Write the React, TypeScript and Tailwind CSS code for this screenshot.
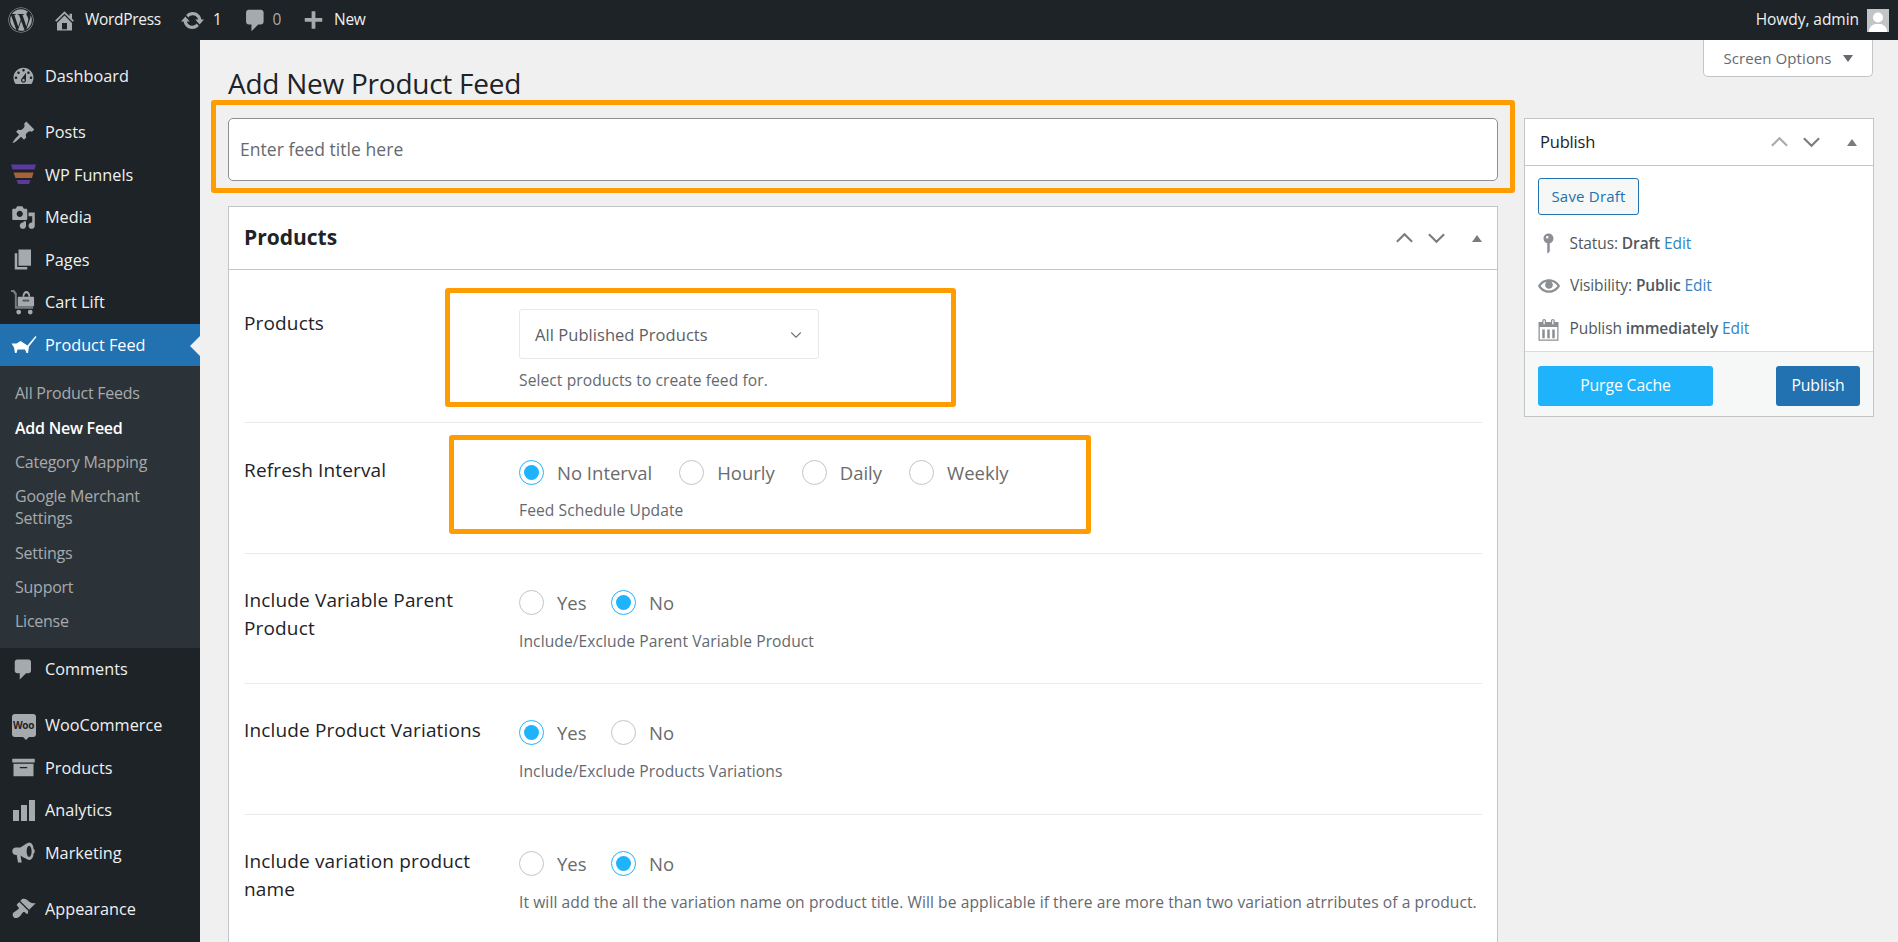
import { FaWordpress } from "react-icons/fa";
import { ChevronDown } from "lucide-react";

const font = "font-['Open_Sans','Noto_Sans',sans-serif]";

function Dash({ d, className, evenodd }: { d: string; className?: string; evenodd?: boolean }) {
  return (
    <svg viewBox="0 0 20 20" className={className} fill="currentColor">
      <path d={d} fillRule={evenodd ? "evenodd" : undefined} />
    </svg>
  );
}

const icons = {
  home: "M16 8.5l1.53 1.53-1.06 1.06L10 4.62l-6.47 6.47-1.06-1.06L10 2.5l4 4v-2h2v4zm-6-2.46l6 5.99V18H4v-5.97zM12 17v-5H8v5h4z",
  update: "M10.2 3.28c3.53 0 6.43 2.61 6.92 6h2.08l-3.5 4-3.5-4h2.32c-.45-1.97-2.21-3.44-4.32-3.44-1.45 0-2.73.71-3.54 1.78L4.95 5.66C6.23 4.2 8.11 3.28 10.2 3.28zm-.4 13.44c-3.52 0-6.43-2.61-6.92-6H.8l3.5-4c1.17 1.33 2.33 2.67 3.5 4H5.48c.45 1.97 2.21 3.44 4.32 3.44 1.45 0 2.73-.71 3.54-1.78l1.71 1.95c-1.28 1.46-3.15 2.39-5.25 2.39z",
  comment: "M5 2h9c1.1 0 2 .9 2 2v7c0 1.1-.9 2-2 2h-2l-5 5v-5H5c-1.1 0-2-.9-2-2V4c0-1.1.9-2 2-2z",
  plus: "M17 8v3h-5.5v5.5h-3V11H3V8h5.5V2.5h3V8H17z",
  dashboard: "M3.76 16h12.48c1.1-1.37 1.76-3.11 1.76-5 0-4.42-3.58-8-8-8s-8 3.58-8 8c0 1.89.66 3.63 1.76 5zM10 4c.55 0 1 .45 1 1s-.45 1-1 1-1-.45-1-1 .45-1 1-1zM6 6c.55 0 1 .45 1 1s-.45 1-1 1-1-.45-1-1 .45-1 1-1zm8 0c.55 0 1 .45 1 1s-.45 1-1 1-1-.45-1-1 .45-1 1-1zm-5.37 5.55L12 7v6c0 1.1-.9 2-2 2s-2-.9-2-2c0-.57.24-1.08.63-1.45zM4 10c.55 0 1 .45 1 1s-.45 1-1 1-1-.45-1-1 .45-1 1-1zm12 0c.55 0 1 .45 1 1s-.45 1-1 1-1-.45-1-1 .45-1 1-1zm-5 3c0-.55-.45-1-1-1s-1 .45-1 1 .45 1 1 1 1-.45 1-1z",
  pin: "M10.44 3.02l1.82-1.82 6.36 6.35-1.83 1.82c-1.05-.68-2.48-.57-3.41.36l-.75.75c-.92.93-1.04 2.35-.35 3.41l-1.83 1.82-2.41-2.41-2.8 2.79c-.42.42-3.38 2.71-3.8 2.29s1.86-3.39 2.28-3.81l2.79-2.79L4.1 9.36l1.83-1.82c1.05.69 2.48.57 3.4-.36l.75-.75c.93-.92 1.05-2.35.36-3.41z",
  media: "M13 11V4c0-.55-.45-1-1-1h-1.67L9 1H5L3.67 3H2c-.55 0-1 .45-1 1v7c0 .55.45 1 1 1h10c.55 0 1-.45 1-1zM7 4.5c1.38 0 2.5 1.12 2.5 2.5S8.38 9.5 7 9.5 4.5 8.38 4.5 7 5.62 4.5 7 4.5zM14 6h5v10.5c0 1.38-1.12 2.5-2.5 2.5S14 17.88 14 16.5s1.12-2.5 2.5-2.5c.17 0 .34.02.5.05V9h-3V6zm-4 8.05V13h2v3.5c0 1.38-1.12 2.5-2.5 2.5S7 17.88 7 16.5 8.12 14 9.5 14c.17 0 .34.02.5.05z",
  pages: "M6 15V2h10v13H6zm-1 1h8v2H3V5h2v11z",
  archive: "M19 3v3H1V3h18zM2 7h16v10H2V7zm11 2.5H7v1h6v-1z",
  megaphone: "M18 7c0-2.8-1.6-5-3.5-5-1 0-7 4-7 4H4C2.3 6 1 7.3 1 9s1.3 3 3 3h.6l1 6h3l-1-5.6c2 1.3 6 3.6 6.9 3.6 1.9 0 3.5-2.2 3.5-5 .6-.4 1-1.2 1-2s-.4-1.6-1-2zm-3.5 6.5c-1.1 0-2-2-2-4.5s.9-4.5 2-4.5 2 2 2 4.5-.9 4.5-2 4.5z",
  brush: "M14.48 11.06L7.41 3.99l1.5-1.5c.5-.56 2.3-.47 3.51.32 1.21.8 1.43 1.28 2.91 2.1 1.18.64 2.45 1.26 4.45.85zm-.71.71L6.7 4.7 4.93 6.47c-.39.39-.39 1.02 0 1.41l1.06 1.06c.39.39.39 1.03 0 1.42-.6.6-1.43 1.11-2.21 1.69-.35.26-.7.53-1.01.84C1.43 13.23.78 15.6 2.09 16.91c1.31 1.31 3.67.66 5.02-.69.31-.31.58-.66.84-1.01.58-.78 1.09-1.61 1.69-2.21.39-.39 1.02-.39 1.41 0l1.06 1.06c.39.39 1.03.39 1.42 0z",
  status: "M14 6c0 1.86-1.28 3.41-3 3.86V16c0 1-2 2-2 2V9.86c-1.72-.45-3-2-3-3.86 0-2.21 1.79-4 4-4s4 1.79 4 4zM8 5c0 .55.45 1 1 1s1-.45 1-1-.45-1-1-1-1 .45-1 1z",
  eye: "M19.7 9.4C17.7 6 14 3.9 10 3.9S2.3 6 .3 9.4L0 10l.3.6c2 3.4 5.7 5.5 9.7 5.5s7.7-2.1 9.7-5.5l.3-.6-.3-.6zM10 14.1c-3.1 0-6-1.6-7.7-4.1C3.6 8 5.7 6.6 8 6.1c-.9.6-1.5 1.7-1.5 2.9 0 1.9 1.6 3.5 3.5 3.5s3.5-1.6 3.5-3.5c0-1.2-.6-2.2-1.5-2.9 2.3.5 4.4 1.9 5.7 3.9-1.7 2.5-4.6 4.1-7.7 4.1z",
  calendar: "M15 4h3v15H2V4h3V3c0-.41.15-.76.44-1.06.29-.29.65-.44 1.06-.44s.77.15 1.06.44c.29.3.44.65.44 1.06v1h4V3c0-.41.15-.76.44-1.06.29-.29.65-.44 1.06-.44s.77.15 1.06.44c.29.3.44.65.44 1.06v1zM6 3v2.5c0 .14.05.26.15.36.09.09.21.14.35.14s.26-.05.35-.14c.1-.1.15-.22.15-.36V3c0-.14-.05-.26-.15-.35-.09-.1-.21-.15-.35-.15s-.26.05-.35.15c-.1.09-.15.21-.15.35zm7 0v2.5c0 .14.05.26.14.36.1.09.22.14.36.14s.26-.05.36-.14c.09-.1.14-.22.14-.36V3c0-.14-.05-.26-.14-.35-.1-.1-.22-.15-.36-.15s-.26.05-.36.15c-.09.09-.14.21-.14.35zM17 18V8H3v10h14zM5 10h2v7H5v-7zm4 0h2v7H9v-7zm4 0h2v7h-2v-7z",
};

function FunnelIcon() {
  return (
    <svg viewBox="0 0 26 20" className="h-[21px] w-[26px]">
      <path d="M0 0h25l-1.500 5H1.500z" fill="#5b3a9e" />
      <path d="M2.500 8h20l-1.500 5.500H4.500z" fill="#a8623a" />
      <path d="M5.500 15.500h14l-1.500 4h-11z" fill="#5b3a9e" />
    </svg>
  );
}

function CartIcon() {
  return (
    <svg viewBox="0 0 26 26" className="h-[25px] w-[25px]">
      <path d="M0 0h3.500l2.500 3.500V17h17v2.500H4V5L2 2H0z" fill="#787c82" />
      <rect x="7" y="7" width="17" height="10" rx="1" fill="#a7aaad" />
      <path d="M12 7c0-8 8-8 8 0h-1.800c0-5-4.400-5-4.400 0z" fill="#a7aaad" />
      <rect x="12" y="10" width="7" height="2" fill="#50575e" />
      <circle cx="8" cy="23" r="2.500" fill="#a7aaad" />
      <circle cx="20" cy="23" r="2.500" fill="#a7aaad" />
    </svg>
  );
}

function FeedIcon() {
  return (
    <svg viewBox="0 0 26 20" className="h-[20px] w-[26px]" fill="#fff">
      <path d="M0.500 8.500L5.500 8.500L9.500 6L16.500 10.500L24.500 1L25.500 2L18 11.500L17 18H15.500L14 14.500H6.500L5.500 18H4L3 12.500z" />
    </svg>
  );
}

function WooIcon() {
  return (
    <span className="relative flex h-[23px] w-[24px] items-center justify-center rounded-[3px] bg-[#a7aaad] text-[10px] font-bold leading-none tracking-[-0.3px] text-[#1d2327]">
      Woo
      <span className="absolute -bottom-[3px] left-[11px] h-0 w-0 border-x-[3px] border-t-[3px] border-x-transparent border-t-[#a7aaad]" />
    </span>
  );
}

function BarsIcon() {
  return (
    <span className="flex h-[21px] items-end gap-[2px]">
      <span className="h-[11px] w-[6px] bg-[#a7aaad]" />
      <span className="h-[16px] w-[6px] bg-[#a7aaad]" />
      <span className="h-[21px] w-[6px] bg-[#a7aaad]" />
    </span>
  );
}

function dashIcon(d: string, evenodd?: boolean) {
  return <Dash d={d} evenodd={evenodd} className="h-[25px] w-[25px] text-[#a7aaad]" />;
}

function MenuItem({ icon, label, active }: { icon: React.ReactNode; label: string; active?: boolean }) {
  return (
    <div className={`relative flex h-[42.5px] items-center ${active ? "bg-[#2271b1] text-white" : "text-[#f0f0f1]"}`}>
      <span className="flex w-[45px] shrink-0 items-center justify-center pl-[2px]">{icon}</span>
      <span className="text-[16.25px]">{label}</span>
      {active && (
        <span className="absolute right-0 top-[12px] h-0 w-0 border-y-[10px] border-r-[10px] border-y-transparent border-r-[#f0f0f0]" />
      )}
    </div>
  );
}

const subItems = ["All Product Feeds", "Add New Feed", "Category Mapping", "Google Merchant Settings", "Settings", "Support", "License"];

function Sidebar() {
  return (
    <aside className="h-[902px] w-[200px] shrink-0 overflow-hidden bg-[#1d2327] pt-[15px]">
      <MenuItem icon={dashIcon(icons.dashboard, true)} label="Dashboard" />
      <div className="mt-[13.5px]">
        <MenuItem icon={dashIcon(icons.pin)} label="Posts" />
        <MenuItem icon={<FunnelIcon />} label="WP Funnels" />
        <MenuItem icon={dashIcon(icons.media)} label="Media" />
        <MenuItem icon={dashIcon(icons.pages)} label="Pages" />
        <MenuItem icon={<CartIcon />} label="Cart Lift" />
        <MenuItem icon={<FeedIcon />} label="Product Feed" active />
      </div>
      <ul className="flex flex-col bg-[#2c3338] pb-[9.5px] pt-[10px] text-[16px] leading-[22px] tracking-[-0.25px] text-[#a7aaad]">
        {subItems.map((s) => (
          <li key={s} className={`px-[15px] py-[6.2px] ${s === "Add New Feed" ? "font-semibold text-white" : ""}`}>
            {s}
          </li>
        ))}
      </ul>
      <MenuItem icon={dashIcon(icons.comment)} label="Comments" />
      <div className="mt-[13.5px]">
        <MenuItem icon={<WooIcon />} label="WooCommerce" />
        <MenuItem icon={dashIcon(icons.archive)} label="Products" />
        <MenuItem icon={<BarsIcon />} label="Analytics" />
        <MenuItem icon={dashIcon(icons.megaphone)} label="Marketing" />
      </div>
      <div className="mt-[13.5px]">
        <MenuItem icon={dashIcon(icons.brush)} label="Appearance" />
      </div>
    </aside>
  );
}

function TopBar() {
  return (
    <header className="flex h-[40px] items-center bg-[#1d2327] text-[15.5px] tracking-[-0.3px] text-[#f0f0f1]">
      <FaWordpress className="ml-[8px] h-[26px] w-[26px] text-[#a7aaad]" />
      <Dash d={icons.home} className="ml-[18px] h-[25px] w-[25px] text-[#a7aaad]" />
      <span className="ml-[8px] font-medium">WordPress</span>
      <Dash d={icons.update} className="ml-[19px] h-[25px] w-[25px] text-[#a7aaad]" />
      <span className="ml-[8px] font-medium">1</span>
      <Dash d={icons.comment} className="ml-[21px] h-[27px] w-[27px] text-[#a7aaad]" />
      <span className="ml-[3px] text-[#a7aaad]">0</span>
      <Dash d={icons.plus} className="ml-[20px] h-[25px] w-[25px] text-[#a7aaad]" />
      <span className="ml-[8px] font-medium">New</span>
      <span className="ml-auto font-medium tracking-[-0.05px]">Howdy, admin</span>
      <span className="ml-[8px] mr-[9px] flex h-[23px] w-[22px] items-end justify-center overflow-hidden bg-[#c3c4c7]">
        <svg viewBox="0 0 22 23" className="h-[23px] w-[22px]" fill="#fff">
          <circle cx="11" cy="8.500" r="5" />
          <path d="M2 23c0-5 3-7 6-8h6c3 1 6 3 6 8z" />
        </svg>
      </span>
    </header>
  );
}

function Arrows({ muted }: { muted?: boolean }) {
  return (
    <div className="flex items-center text-[#787c82]">
      <svg viewBox="0 0 20 12" className={`h-[12px] w-[19px] ${muted ? "text-[#a7aaad]" : ""}`} fill="none" stroke="currentColor" strokeWidth="2.200">
        <path d="M2 10l8-8 8 8" />
      </svg>
      <svg viewBox="0 0 20 12" className="ml-[13px] h-[12px] w-[19px]" fill="none" stroke="currentColor" strokeWidth="2.200">
        <path d="M2 2l8 8 8-8" />
      </svg>
      <span className="ml-[26px] h-0 w-0 border-x-[5.500px] border-b-[7px] border-x-transparent border-b-[#787c82]" />
    </div>
  );
}

function Radio({ on, label }: { on?: boolean; label: string }) {
  return (
    <label className="flex h-[25px] items-center">
      <span className={`flex h-[25px] w-[25px] items-center justify-center rounded-full border ${on ? "border-[#1fb3fb]" : "border-[#c4c4c4]"}`}>
        {on && <span className="h-[15px] w-[15px] rounded-full bg-[#1fb3fb]" />}
      </span>
      <span className="ml-[13px] text-[18.5px] font-medium leading-[25px] text-[#6b6b6b]">{label}</span>
    </label>
  );
}

function Box({ className }: { className: string }) {
  return <div className={`pointer-events-none absolute rounded-[3px] border-[5px] border-[#ff9d00] ${className}`} />;
}

function Hint({ children, className }: { children: React.ReactNode; className: string }) {
  return <p className={`whitespace-nowrap text-[15.6px] leading-[22px] tracking-[0.08px] text-[#646970] ${className}`}>{children}</p>;
}

function Row({ label, className, children }: { label: React.ReactNode; className: string; children: React.ReactNode }) {
  return (
    <div className={`flex ${className}`}>
      <div className="w-[275px] shrink-0 pr-[25px] text-[19px] font-medium leading-[28px] tracking-[0.15px] text-[#1d2327]">{label}</div>
      <div className="relative">{children}</div>
    </div>
  );
}

function YesNo({ yes }: { yes: boolean }) {
  return (
    <div className="flex gap-[24.5px] pt-[4px]">
      <Radio label="Yes" on={yes} />
      <Radio label="No" on={!yes} />
    </div>
  );
}

function ProductsCard() {
  return (
    <section className="mt-[25px] h-[800px] border border-[#c3c4c7] bg-white">
      <div className="flex h-[63px] items-center justify-between border-b border-[#c3c4c7] pl-[15px] pr-[15px]">
        <h2 className="text-[21px] font-bold text-[#1d2327]">Products</h2>
        <Arrows />
      </div>
      <div className="px-[15px]">
        <Row label="Products" className="h-[153px] border-b border-[#ebebeb] pt-[39px]">
          <Box className="-left-[74px] -top-[21px] h-[119px] w-[511px]" />
          <div className="flex h-[50px] w-[300px] items-center justify-between rounded-[3px] border border-[#e8e8e8] pl-[15px] pr-[13px] pt-[2px] text-[16.5px] tracking-[0.05px] text-[#5c6066]">
            All Published Products
            <ChevronDown className="h-[18px] w-[18px] text-[#777]" strokeWidth={1.5} />
          </div>
          <Hint className="mt-[10px]">Select products to create feed for.</Hint>
        </Row>
        <Row label="Refresh Interval" className="h-[131px] border-b border-[#ebebeb] pt-[33px]">
          <Box className="-left-[70px] -top-[21px] h-[99px] w-[642px]" />
          <div className="flex gap-[27px] pt-[4px]">
            <Radio label="No Interval" on />
            <Radio label="Hourly" />
            <Radio label="Daily" />
            <Radio label="Weekly" />
          </div>
          <Hint className="mt-[14px]">Feed Schedule Update</Hint>
        </Row>
        <Row label="Include Variable Parent Product" className="h-[130px] border-b border-[#ebebeb] pt-[32px]">
          <YesNo yes={false} />
          <Hint className="mt-[15px]">Include/Exclude Parent Variable Product</Hint>
        </Row>
        <Row label="Include Product Variations" className="h-[131px] border-b border-[#ebebeb] pt-[32px]">
          <YesNo yes />
          <Hint className="mt-[15px]">Include/Exclude Products Variations</Hint>
        </Row>
        <Row label="Include variation product name" className="h-[131px] pt-[32px]">
          <YesNo yes={false} />
          <Hint className="mt-[15px]">It will add the all the variation name on product title. Will be applicable if there are more than two variation atrributes of a product.</Hint>
        </Row>
      </div>
    </section>
  );
}

function PublishPanel() {
  return (
    <section className="border border-[#c3c4c7] bg-white text-[15.5px] tracking-[-0.1px] text-[#50575e]">
      <div className="flex h-[47px] items-center justify-between border-b border-[#c3c4c7] pl-[15px] pr-[16px]">
        <h2 className="text-[16.5px] tracking-[-0.2px] text-[#1d2327]">Publish</h2>
        <Arrows muted />
      </div>
      <div className="px-[13px] pt-[12px]">
        <button className="h-[37px] w-[101px] rounded-[3px] border border-[#2271b1] bg-[#f6f7f7] text-[15px] tracking-[0.2px] text-[#2271b1]">Save Draft</button>
        <div className="mt-[7px] flex h-[43px] items-center">
          <Dash d={icons.status} className="-ml-[2px] h-[25px] w-[25px] text-[#8c8f94]" />
          <span className="ml-[8.5px]">Status: <b className="font-semibold">Draft</b> <a className="text-[#3582c4]">Edit</a></span>
        </div>
        <div className="flex h-[42px] items-center">
          <Dash d={icons.eye} className="h-[22px] w-[22px] text-[#8c8f94]" />
          <span className="ml-[10px]">Visibility: <b className="font-semibold">Public</b> <a className="text-[#3582c4]">Edit</a></span>
        </div>
        <div className="flex h-[44px] items-center">
          <Dash d={icons.calendar} className="-ml-[2px] h-[25px] w-[25px] text-[#8c8f94]" />
          <span className="ml-[8.5px]">Publish <b className="font-semibold">immediately</b> <a className="text-[#3582c4]">Edit</a></span>
        </div>
      </div>
      <div className="flex h-[65px] items-center justify-between border-t border-[#dcdcde] bg-[#f6f7f7] px-[13px] pt-[3px]">
        <button className="h-[40px] w-[175px] rounded-[3px] bg-[#1fb3fb] text-[15.75px] text-white">Purge Cache</button>
        <button className="h-[40px] w-[84px] rounded-[3px] bg-[#2271b1] text-[15.75px] text-white">Publish</button>
      </div>
    </section>
  );
}

export default function App() {
  return (
    <div className={`h-[942px] w-[1898px] overflow-hidden bg-[#f0f0f0] ${font}`}>
      <TopBar />
      <div className="flex">
        <Sidebar />
        <main className="relative flex flex-1 gap-[26px] pl-[28px] pt-[23px]">
          <div className="absolute right-[25px] top-0 flex h-[37px] w-[170px] items-center justify-center gap-[11px] rounded-b-[5px] border border-t-0 border-[#c3c4c7] bg-white text-[15px] tracking-[0.1px] text-[#646970]">
            Screen Options
            <span className="h-0 w-0 border-x-[5px] border-t-[7px] border-x-transparent border-t-[#646970]" />
          </div>
          <div className="w-[1270px] shrink-0">
            <h1 className="h-[40px] text-[28px] font-normal leading-[40px] tracking-[-0.25px] text-[#1d2327]">Add New Product Feed</h1>
            <div className="relative mt-[15px]">
              <Box className="-left-[17px] -top-[18px] h-[93px] w-[1304px]" />
              <input
                placeholder="Enter feed title here"
                className="block h-[63px] w-full rounded-[5px] border border-[#8c8f94] bg-white px-[11px] pb-[2px] text-[17.5px] tracking-[0.05px] text-[#2c3338] outline-none placeholder:text-[#646970]"
              />
            </div>
            <ProductsCard />
          </div>
          <div className="w-[350px] shrink-0 pt-[55px]">
            <PublishPanel />
          </div>
        </main>
      </div>
    </div>
  );
}
